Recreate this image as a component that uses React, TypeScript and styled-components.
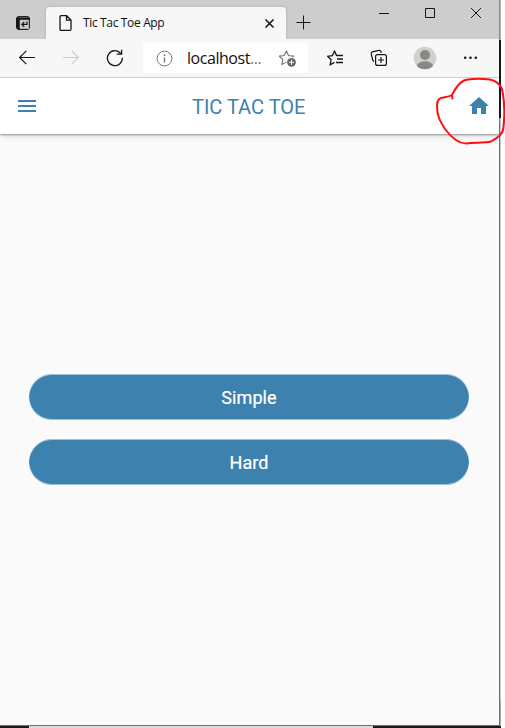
import React from "react";
import styled, { createGlobalStyle } from "styled-components";

const GlobalStyle = createGlobalStyle`
  * { box-sizing: border-box; }
  html, body { margin: 0; padding: 0; background: #fff; overflow: hidden; }
  svg { display: block; flex: none; }
`;

const Desktop = styled.div`
  position: relative;
  width: 505px;
  height: 728px;
  display: grid;
  grid-template-columns: 499px 2px;
  grid-template-rows: 726px 2px;
  overflow: hidden;
`;

const BrowserWindow = styled.div`
  display: flex;
  flex-direction: column;
  background: #fafafa;
  border-bottom: 1px solid #707070;
`;

const DesktopEdge = styled.div`
  background:
    linear-gradient(#8c8c8c 0 40px, #14171c 40px 118px, #707070 118px) 0 0 / 1px 100% no-repeat,
    linear-gradient(#b4b4b4 0 40px, #14171c 40px 118px, #c8c8c8 118px 700px, #aaa 700px);
`;

const Taskbar = styled.div`
  grid-column: 1 / 3;
  background: linear-gradient(90deg, #1b1c1e 0 29px, #dcdcdc 29px 373px, #17181a 373px);
`;

const TabStrip = styled.div`
  height: 39px;
  flex: none;
  display: flex;
  background: #cdcdcd;
`;

const TabActions = styled.div`
  width: 46px;
  padding: 15px 0 0 15px;
`;

const Tab = styled.div`
  position: relative;
  width: 240px;
  height: 32px;
  margin-top: 7px;
  padding: 0 11px 0 13px;
  display: flex;
  align-items: center;
  background: #f7f7f7;
  border-radius: 4px 4px 0 0;
  box-shadow: 0 0 3px rgba(0, 0, 0, 0.18);
  clip-path: inset(-4px -4px 0 -4px);
`;

const TabTitle = styled.span`
  flex: 1;
  margin-left: 11px;
  font: 12px/16px "Open Sans", sans-serif;
  letter-spacing: -0.35px;
  color: #111;
  white-space: nowrap;
`;

const NewTab = styled.div`
  width: 76px;
  padding: 15px 0 0 10px;
`;

const WindowControls = styled.div`
  display: flex;
  gap: 36px;
  padding: 8px 0 0 17px;
`;

const Toolbar = styled.div`
  height: 39px;
  flex: none;
  display: flex;
  align-items: center;
  padding-left: 18px;
  background: #f7f7f7;
  border-bottom: 1px solid #cfcfcf;
`;

const NavButtons = styled.div`
  width: 125px;
  display: flex;
  gap: 26px;
`;

const AddressBar = styled.div`
  width: 165px;
  height: 30px;
  padding: 0 11px 0 13px;
  display: flex;
  align-items: center;
  background: #fff;
  border-radius: 3px;
`;

const Address = styled.span`
  flex: 1;
  margin-left: 14px;
  font: 16px/22px "Open Sans", sans-serif;
  letter-spacing: -0.45px;
  color: #111;
  white-space: nowrap;
`;

const Ellipsis = styled.span`
  color: #777;
`;

const ToolbarActions = styled.div`
  display: flex;
  align-items: center;
  margin-left: 19px;
`;

const ActionSlot = styled.div<{ $width: number }>`
  width: ${(p) => p.$width}px;
`;

const AppHeader = styled.header`
  height: 56px;
  flex: none;
  padding: 0 10px 0 18px;
  display: grid;
  grid-template-columns: 40px 1fr 20px;
  align-items: center;
  background: #fff;
  box-shadow: 0 1px 2px rgba(0, 0, 0, 0.36), 0 2px 6px rgba(0, 0, 0, 0.12);
  clip-path: inset(0 0 -10px 0);
`;

const AppTitle = styled.h1`
  margin: 2px 0 0 134px;
  font: 400 20px/24px Roboto, sans-serif;
  color: #3d81ae;
  white-space: nowrap;
`;

const Levels = styled.main`
  flex: 1;
  display: flex;
  flex-direction: column;
  gap: 19px;
  padding: 240px 30px 0 29px;
`;

const LevelButton = styled.button`
  height: 46px;
  width: 100%;
  padding: 1px 0 0;
  border: 0;
  border-radius: 23px;
  background: #3d81ae;
  box-shadow: inset 0 1px rgba(255, 255, 255, 0.5), inset 0 -1px rgba(255, 255, 255, 0.5);
  color: #fff;
  font: 400 18px/22px Roboto, sans-serif;
  letter-spacing: 0.1px;
  -webkit-text-stroke: 0.2px #fff;
`;

const Annotation = styled.svg`
  position: absolute;
  left: 430px;
  top: 70px;
`;

const line = { fill: "none", stroke: "#161616", strokeWidth: 1.2 };
const starPath = "M7.5 1.2 L9.5 5.4 L14.3 6 L10.8 9.3 L11.7 14 L7.5 11.7 L3.2 14 L4.1 9.3 L.7 6 L5.4 5.4Z";

const TabActionsIcon = () => (
  <svg width="16" height="16" viewBox="0 0 16 16">
    <path d="M3 1H13L15 3V13L13 15H3L1 13V3Z" fill="#161616" />
    <path d="M3 2.3H13M5 5H13.8V13.7H5Z" fill="#cdcdcd" stroke="#cdcdcd" strokeWidth=".4" />
    <path d="M12 6.5V9.4H7M9.2 7 6.8 9.4 9.2 11.8" {...line} />
  </svg>
);

const PageIcon = () => (
  <svg width="13" height="16" viewBox="0 0 13 16">
    <path d="M1 2Q1 .7 2.2 .7H7.6L12 5V14Q12 15.3 10.8 15.3H2.2Q1 15.3 1 14Z M7.5 .8V5.2H12" {...line} strokeWidth={1.3} />
  </svg>
);

const BackIcon = ({ forward = false }: { forward?: boolean }) => (
  <svg width="18" height="18" viewBox="0 0 18 18">
    <path
      d={forward ? "M1 8.5H16.4M9.7 1.8 16.4 8.5 9.7 15.2" : "M17 8.5H1.6M8.3 1.8 1.6 8.5 8.3 15.2"}
      {...line}
      stroke={forward ? "#cbcbcb" : "#161616"}
    />
  </svg>
);

const ReloadIcon = () => (
  <svg width="18" height="18" viewBox="0 0 18 18">
    <path d="M16.4 8.8A7.5 7.5 0 1 1 14.7 4.4M15.6 .8V5.1H10.8" {...line} strokeWidth={1.3} />
  </svg>
);

const InfoIcon = () => (
  <svg width="17" height="17" viewBox="0 0 17 17">
    <circle cx="8.5" cy="8.5" r="7.4" fill="none" stroke="#767676" />
    <path d="M8.5 7.5V12.5M8.5 4.5V6" stroke="#767676" strokeWidth="1.4" />
  </svg>
);

const AddFavoriteIcon = () => (
  <svg width="18" height="17" viewBox="0 0 18 17">
    <path d={starPath} transform="translate(-.5 -.2) scale(1.05)" fill="none" stroke="#767676" strokeWidth="1.1" />
    <circle cx="12.5" cy="12.3" r="5.3" fill="#fff" />
    <circle cx="12.5" cy="12.3" r="4.4" fill="#666" />
    <path d="M12.5 9.8V14.8M10 12.3H15" stroke="#fff" />
  </svg>
);

const FavoritesIcon = () => (
  <svg width="17" height="17" viewBox="0 0 17 17">
    <path d="M9.6 5.6 7.5 1.2 5.4 5.6 .7 6.2 4.1 9.8 3.2 14.8 7.5 12.4M9.3 5.5H16M10 9H16M9 12.5H16" {...line} strokeWidth={1.3} />
  </svg>
);

const CollectionsIcon = () => (
  <svg width="18" height="18" viewBox="0 0 18 18">
    <path d="M4.1 12.6 2.7 11.2 1.2 4.7Q.9 3.2 2.4 2.8L8.8 1.4Q10.4 1 10.9 2.5L11.2 3.8" {...line} />
    <rect x="5.6" y="5.6" width="10.8" height="10.8" rx="2" {...line} />
    <path d="M11 8V14M8 11H14" {...line} />
  </svg>
);

const AvatarIcon = () => (
  <svg width="24" height="24" viewBox="0 0 24 24">
    <defs><clipPath id="avatar"><circle cx="12" cy="12" r="11.3" /></clipPath></defs>
    <g clipPath="url(#avatar)">
      <rect width="24" height="24" fill="#d2d0ce" />
      <circle cx="12" cy="9" r="5.1" fill="#8a8886" />
      <ellipse cx="12" cy="20.3" rx="8" ry="5" fill="#8a8886" />
    </g>
  </svg>
);

const MoreIcon = () => (
  <svg width="15" height="4" viewBox="0 0 15 4">
    <circle cx="2.2" cy="1.7" r="1.3" fill="#161616" />
    <circle cx="7.5" cy="1.7" r="1.3" fill="#161616" />
    <circle cx="12.8" cy="1.7" r="1.3" fill="#161616" />
  </svg>
);

export default function App() {
  return (
    <>
      <GlobalStyle />
      <Desktop>
        <BrowserWindow>
          <TabStrip>
            <TabActions><TabActionsIcon /></TabActions>
            <Tab>
              <PageIcon />
              <TabTitle>Tic Tac Toe App</TabTitle>
              <svg width="11" height="11" viewBox="0 0 11 11"><path d="M1.5 1.5 9.5 9.5M9.5 1.5 1.5 9.5" {...line} strokeWidth={1.6} /></svg>
            </Tab>
            <NewTab>
              <svg width="15" height="15" viewBox="0 0 15 15"><path d="M7.5 .5V14.5M.5 7.5H14.5" {...line} strokeWidth={1} /></svg>
            </NewTab>
            <WindowControls>
              <svg width="10" height="11" viewBox="0 0 10 11"><path d="M0 5.5H10" {...line} strokeWidth={1} /></svg>
              <svg width="10" height="10" viewBox="0 0 10 10"><path d="M.5 .5H9.5V9.5H.5Z" {...line} strokeWidth={1} /></svg>
              <svg width="10" height="10" viewBox="0 0 10 10"><path d="M0 0 10 10M10 0 0 10" {...line} strokeWidth={1} /></svg>
            </WindowControls>
          </TabStrip>
          <Toolbar>
            <NavButtons><BackIcon /><BackIcon forward /><ReloadIcon /></NavButtons>
            <AddressBar>
              <InfoIcon />
              <Address>localhost<Ellipsis>...</Ellipsis></Address>
              <AddFavoriteIcon />
            </AddressBar>
            <ToolbarActions>
              <ActionSlot $width={43}><FavoritesIcon /></ActionSlot>
              <ActionSlot $width={43}><CollectionsIcon /></ActionSlot>
              <ActionSlot $width={50}><AvatarIcon /></ActionSlot>
              <MoreIcon />
            </ToolbarActions>
          </Toolbar>
          <AppHeader>
            <svg width="18" height="12" viewBox="0 0 18 12"><path d="M0 0H18V2H0ZM0 5H18V7H0ZM0 10H18V12H0Z" fill="#3d81ae" /></svg>
            <AppTitle>TIC TAC TOE</AppTitle>
            <svg width="20" height="19" viewBox="0 0 20 19"><path d="M8 17V11H12V17H17V9H20L10 0 0 9H3V17Z" fill="#3d81ae" /></svg>
          </AppHeader>
          <Levels>
            <LevelButton>Simple</LevelButton>
            <LevelButton>Hard</LevelButton>
          </Levels>
        </BrowserWindow>
        <DesktopEdge />
        <Taskbar />
        <Annotation width="75" height="78" viewBox="0 0 75 78">
          <path
            d="M22.5 28.5L22 25C25 19 29 13 34 10.5C40 8.5 51 8.5 60 9.5C66 11 70 14 72 19C74 28 75 43 73.5 57C73 64 69 67 61 71.5C55 73 46 72.5 36 73.5C28 73.5 21 67 15 59C10 51 7 46 7 36C7 32 8 29 11 28C15 27 19 27 22 25"
            fill="none" stroke="#ff0d0d" strokeWidth="2" strokeLinecap="round" strokeLinejoin="round"
          />
        </Annotation>
      </Desktop>
    </>
  );
}
